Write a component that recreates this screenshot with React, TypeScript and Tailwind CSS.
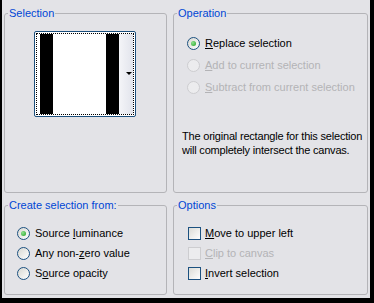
import React from 'react';

const ui = "font-['Liberation_Sans',Arial,sans-serif] text-[11px] leading-[13px]";

function Ul({ children }: { children: React.ReactNode }) {
  return <span className="underline underline-offset-[1px]">{children}</span>;
}

function Group({
  title,
  children,
}: {
  title: string;
  children: React.ReactNode;
}) {
  return (
    <fieldset className="rounded-[3px] border border-[#b4b4b8]">
      <legend className="ml-[3px] px-[1px] text-[#0046d5]">{title}</legend>
      {children}
    </fieldset>
  );
}

function Radio({ checked, disabled }: { checked?: boolean; disabled?: boolean }) {
  return (
    <span
      className={`flex h-[13px] w-[13px] shrink-0 items-center justify-center rounded-full border ${
        disabled
          ? 'border-[#cdcdd0] bg-[#ececee]'
          : 'border-[#1c5180] bg-gradient-to-br from-[#d8d8d2] to-white'
      }`}
    >
      {checked && (
        <span className="h-[5px] w-[5px] rounded-full bg-[radial-gradient(circle_at_35%_35%,#8ee28e,#21a121)]" />
      )}
    </span>
  );
}

function Check({ disabled }: { disabled?: boolean }) {
  return (
    <span
      className={`h-[13px] w-[13px] shrink-0 border ${
        disabled
          ? 'border-[#cdcdd0] bg-[#ececee]'
          : 'border-[#1c5180] bg-gradient-to-br from-[#dcdcd7] to-white'
      }`}
    />
  );
}

function Preview() {
  return (
    <div className="ml-[29px] mt-[11px] h-[86px] w-[102px] rounded-[2px] border border-[#1c4f7c] bg-white p-[1px]">
      <div className="flex h-full border border-dotted border-black">
        <div className="w-[3px] bg-white" />
        <div className="w-[13px] bg-black" />
        <div className="w-[53px] bg-white" />
        <div className="w-[13px] bg-black" />
        <div className="relative flex-1 bg-gradient-to-r from-[#f4f5f8] to-[#e2e4ec]">
          <span className="absolute right-[1px] top-[38px] h-0 w-0 border-x-[3px] border-t-[3px] border-x-transparent border-t-black" />
        </div>
      </div>
    </div>
  );
}

export default function App() {
  return (
    <div className={`h-[303px] w-[374px] bg-black pl-[2px] ${ui} text-black`}>
      <div className="grid h-[298px] w-[368px] grid-cols-[163px_195px] grid-rows-[186px_96px] gap-x-[6px] gap-y-[6px] bg-[#e3e3e7] px-[2px] pt-[7px]">
        <Group title="Selection">
          <Preview />
        </Group>

        <Group title="Operation">
          <div className="flex flex-col pl-[13px] pt-[12px]">
            <div className="flex h-[22px] items-center gap-[5px]">
              <Radio checked />
              <span>
                <Ul>R</Ul>eplace selection
              </span>
            </div>
            <div className="flex h-[22px] items-center gap-[5px] text-[#b3b3b6]">
              <Radio disabled />
              <span>
                <Ul>A</Ul>dd to current selection
              </span>
            </div>
            <div className="flex h-[22px] items-center gap-[5px] text-[#b3b3b6]">
              <Radio disabled />
              <span>
                <Ul>S</Ul>ubtract from current selection
              </span>
            </div>
          </div>
          <p className="mt-[31px] whitespace-nowrap pl-[8px] leading-[14px] tracking-[-0.2px]">
            The original rectangle for this selection
            <br />
            will completely intersect the canvas.
          </p>
        </Group>

        <Group title="Create selection from:">
          <div className="flex flex-col pl-[12px] pt-[11px]">
            <div className="flex h-[20px] items-center gap-[5px]">
              <Radio checked />
              <span>
                Source <Ul>l</Ul>uminance
              </span>
            </div>
            <div className="flex h-[20px] items-center gap-[5px]">
              <Radio />
              <span>
                Any non-<Ul>z</Ul>ero value
              </span>
            </div>
            <div className="flex h-[20px] items-center gap-[5px]">
              <Radio />
              <span>
                S<Ul>o</Ul>urce opacity
              </span>
            </div>
          </div>
        </Group>

        <Group title="Options">
          <div className="flex flex-col pl-[14px] pt-[11px]">
            <div className="flex h-[20px] items-center gap-[4px]">
              <Check />
              <span>
                <Ul>M</Ul>ove to upper left
              </span>
            </div>
            <div className="flex h-[20px] items-center gap-[4px] text-[#b3b3b6]">
              <Check disabled />
              <span>
                <Ul>C</Ul>lip to canvas
              </span>
            </div>
            <div className="flex h-[20px] items-center gap-[4px]">
              <Check />
              <span>
                <Ul>I</Ul>nvert selection
              </span>
            </div>
          </div>
        </Group>
      </div>
    </div>
  );
}
